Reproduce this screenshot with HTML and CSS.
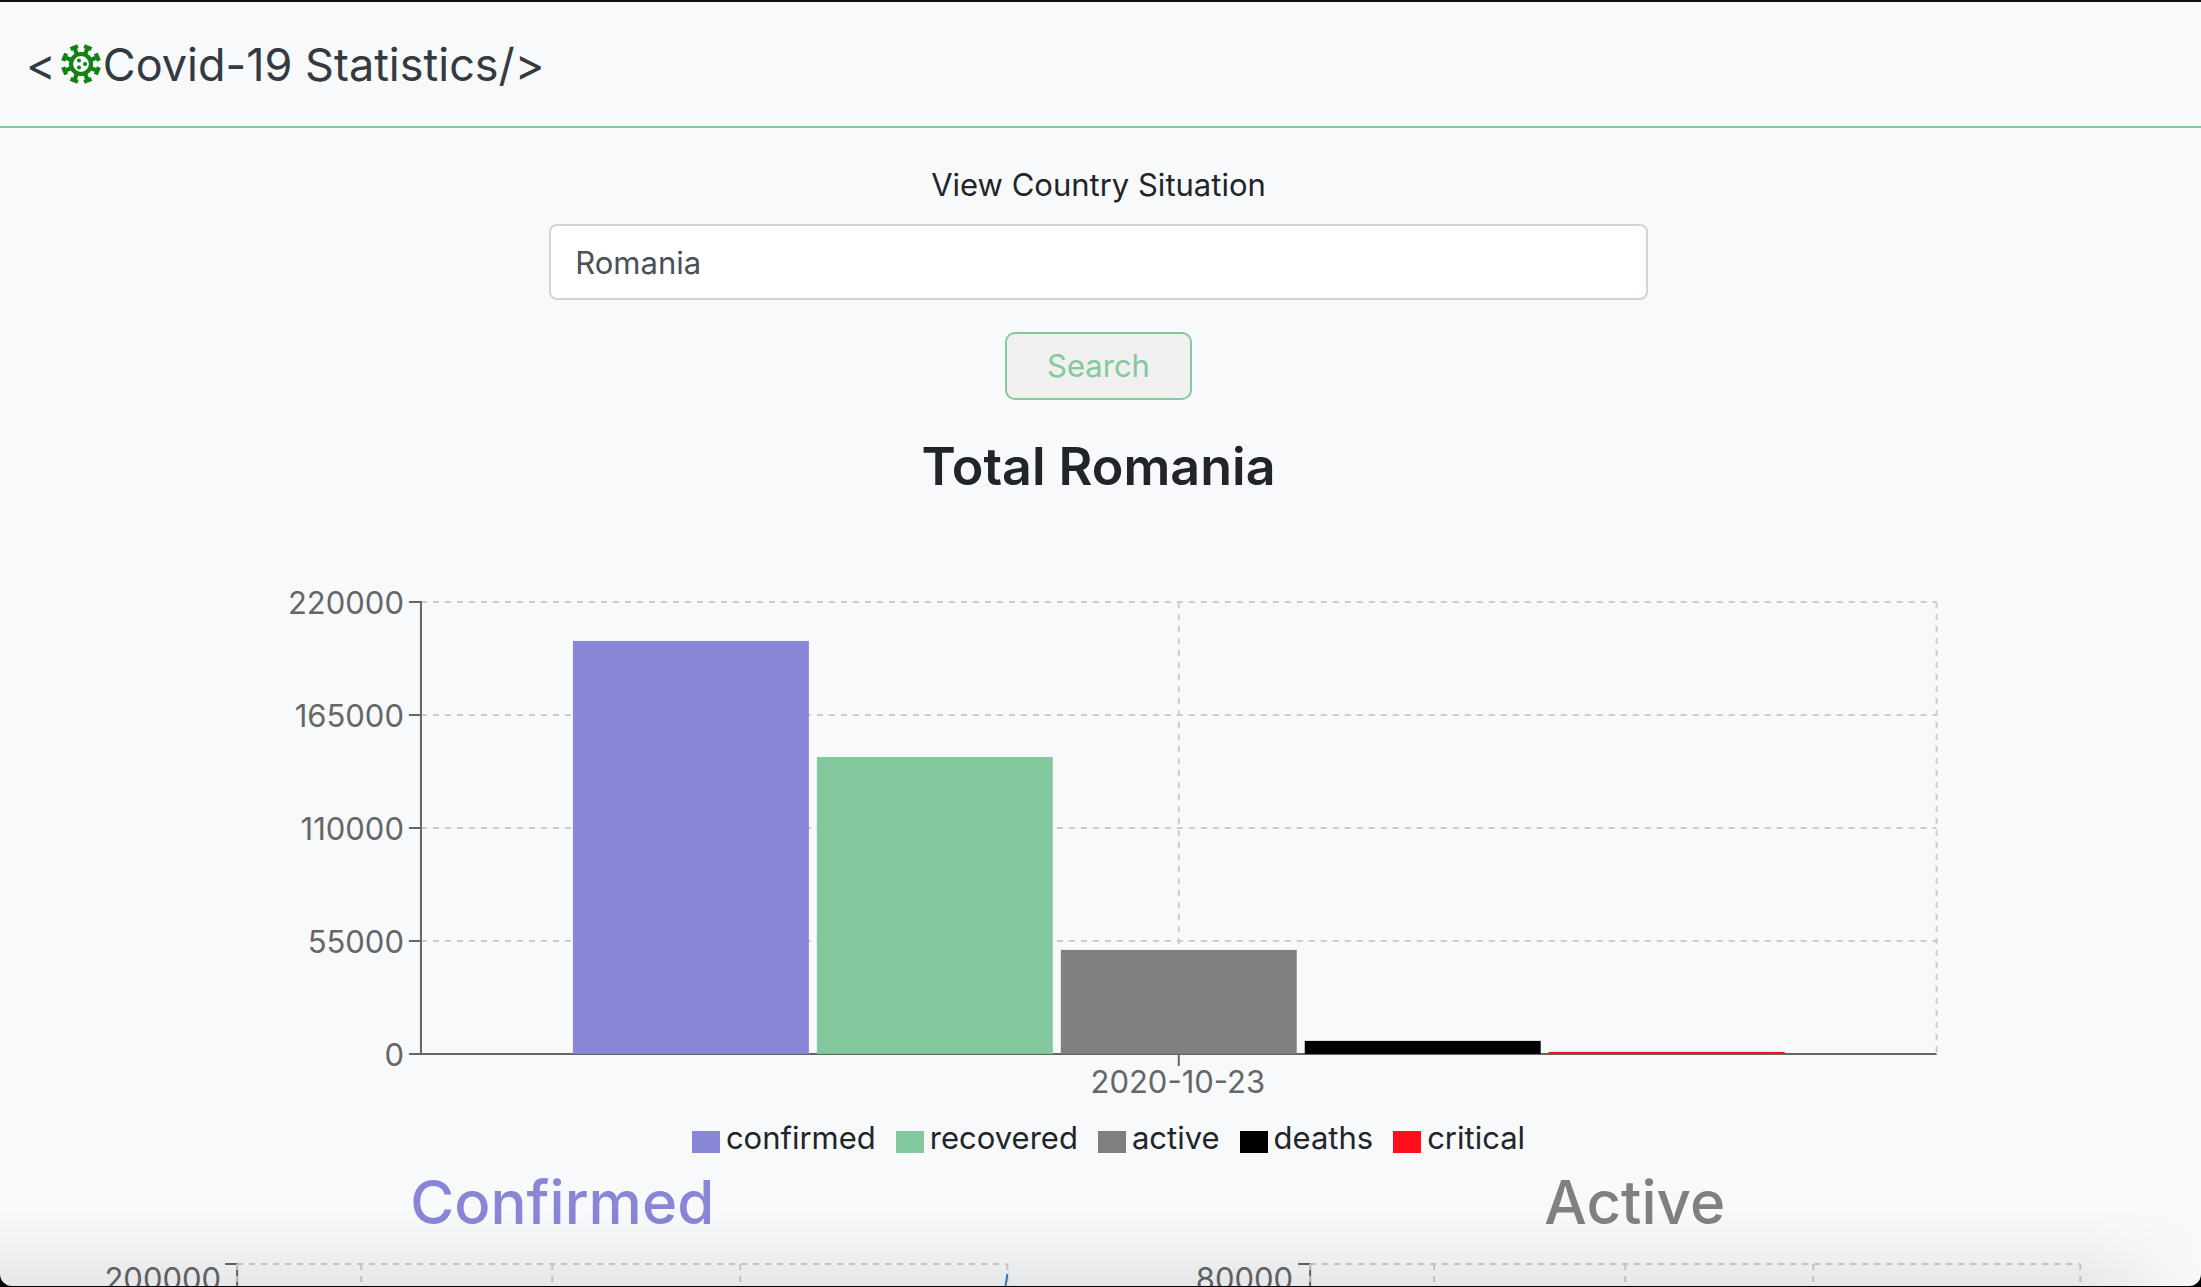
FILE: index.html
```html
<!DOCTYPE html>
<html lang="en">
<head>
<meta charset="utf-8">
<meta name="viewport" content="width=device-width, initial-scale=1">
<title>Covid-19 Statistics</title>
<link rel="stylesheet" href="styles.css">
</head>
<body>
<div class="window">
  <header class="navbar">
    <a class="brand" href="#"><span>&lt;</span><svg class="brand-icon" viewBox="-20 -20 40 40" aria-hidden="true">
      <defs><path id="spike" d="M0-11V-18M-4-17.7H4"/></defs>
      <g fill="none" stroke="currentColor" stroke-width="4.2">
        <circle r="10"/>
        <use href="#spike" transform="rotate(22.5)"/>
        <use href="#spike" transform="rotate(67.5)"/>
        <use href="#spike" transform="rotate(112.5)"/>
        <use href="#spike" transform="rotate(157.5)"/>
        <use href="#spike" transform="rotate(202.5)"/>
        <use href="#spike" transform="rotate(247.5)"/>
        <use href="#spike" transform="rotate(292.5)"/>
        <use href="#spike" transform="rotate(337.5)"/>
      </g>
      <g fill="currentColor"><circle cx="-2" cy="-3.6" r="2"/><circle cx="4" cy="0" r="2"/><circle cx="-2" cy="3.6" r="2"/></g>
    </svg><span>Covid-19 Statistics/&gt;</span></a>
  </header>

  <main class="content">
    <form class="search">
      <label class="search-label" for="country">View Country Situation</label>
      <input class="search-input" id="country" type="text" value="Romania">
      <button class="search-button" type="button">Search</button>
    </form>

    <section class="total">
      <h1 class="total-title">Total Romania</h1>
      <svg class="total-chart" viewBox="0 0 1758 528" role="img" aria-label="Totals for Romania on 2020-10-23">
        <g class="grid">
          <path d="M201 20H1717M201 133H1717M201 246H1717M201 359H1717"/>
          <path d="M959 20V472M1717 20V472"/>
        </g>
        <path class="axis" d="M201 19V472M189 472H1717M189 20H201M189 133H201M189 246H201M189 359H201M959 472V484"/>
        <g class="tick tick-y">
          <text x="184" y="32">220000</text>
          <text x="184" y="145">165000</text>
          <text x="184" y="258">110000</text>
          <text x="184" y="371">55000</text>
          <text x="184" y="484">0</text>
        </g>
        <text class="tick tick-x" x="958" y="511">2020-10-23</text>
        <rect class="confirmed" x="353" y="59" width="236" height="413"/>
        <rect class="recovered" x="597" y="175" width="236" height="297"/>
        <rect class="active" x="841" y="368" width="236" height="104"/>
        <rect class="deaths" x="1085" y="459" width="236" height="13"/>
        <rect class="critical" x="1329" y="470" width="236" height="2"/>
      </svg>
      <ul class="legend">
        <li><svg viewBox="0 0 28 22"><rect class="confirmed" width="28" height="22"/></svg>confirmed</li>
        <li><svg viewBox="0 0 28 22"><rect class="recovered" width="28" height="22"/></svg>recovered</li>
        <li><svg viewBox="0 0 28 22"><rect class="active" width="28" height="22"/></svg>active</li>
        <li><svg viewBox="0 0 28 22"><rect class="deaths" width="28" height="22"/></svg>deaths</li>
        <li><svg viewBox="0 0 28 22"><rect class="critical" width="28" height="22"/></svg>critical</li>
      </ul>
    </section>

    <section class="trends">
      <article class="trend">
        <h2 class="trend-title trend-confirmed">Confirmed</h2>
        <svg class="trend-chart" viewBox="0 0 992 60" role="img" aria-label="Confirmed cases over time">
          <path class="axis" d="M131 23V60M119 24H131"/>
          <path class="grid" d="M131 24H901M131 24V60M255 24V60M446 24V60M634 24V60M901 24V60"/>
          <text class="tick tick-y" x="115" y="50">200000</text>
          <path class="series" d="M901 34L897 60"/>
        </svg>
      </article>
      <article class="trend">
        <h2 class="trend-title trend-active">Active</h2>
        <svg class="trend-chart" viewBox="0 0 992 60" role="img" aria-label="Active cases over time">
          <path class="axis" d="M131 23V60M119 24H131"/>
          <path class="grid" d="M131 24H901M131 24V60M255 24V60M446 24V60M634 24V60M901 24V60"/>
          <text class="tick tick-y" x="114" y="50">80000</text>
        </svg>
      </article>
    </section>
  </main>
  <div class="shade"></div>
</div>
</body>
</html>
```
FILE: styles.css
```css
* { box-sizing: border-box; }

body {
  margin: 0;
  background: #000;
  color: #212529;
  font-family: Inter, "Liberation Sans", sans-serif;
  font-size: 31px;
  line-height: 48px;
}

.window {
  position: relative;
  height: calc(100vh - 1px);
  overflow: hidden;
  border-top: 2px solid #111;
  border-radius: 0 0 12px 12px;
  background: #f8f9fb;
}

.navbar {
  display: flex;
  align-items: center;
  height: 126px;
  padding: 2px 26px 0;
  border-bottom: 2px solid #84c99d;
}

.brand {
  display: flex;
  align-items: center;
  color: #343a40;
  font-size: 45px;
  line-height: 72px;
  text-decoration: none;
}

.brand-icon {
  width: 40px;
  height: 40px;
  margin: 0 2px 2px 5px;
  color: #128212;
}

.content { padding-right: 4px; }

.search {
  display: flex;
  flex-direction: column;
  align-items: center;
  padding-top: 33px;
}

.search-input {
  width: 50%;
  height: 76px;
  margin: 15px 0 32px;
  padding: 0 24px;
  border: 2px solid #ced4da;
  border-radius: 8px;
  background: #fff;
  color: #495057;
  font: inherit;
}

.search-button {
  height: 68px;
  padding: 0 40px;
  border: 2px solid #84c99d;
  border-radius: 10px;
  background: #f0f0f0;
  color: #84c99d;
  font: inherit;
}

.total {
  display: flex;
  flex-direction: column;
  align-items: center;
}

.total-title {
  margin: 31px 0 79px;
  font-size: 52px;
  font-weight: 600;
  line-height: 72px;
}

.total-chart {
  display: block;
  width: 80%;
}

.grid {
  fill: none;
  stroke: #ccc;
  stroke-width: 2;
  stroke-dasharray: 6 6;
}

.axis {
  fill: none;
  stroke: #666;
  stroke-width: 2;
}

.tick { fill: #666; }
.tick-y { text-anchor: end; }
.tick-x { text-anchor: middle; }

.confirmed { fill: #8986d8; }
.recovered { fill: #84c99d; }
.active { fill: #808080; }
.deaths { fill: #000; }
.critical { fill: #ff0d1a; }

.legend {
  display: flex;
  gap: 20px;
  margin: 4px 0 0;
  padding: 0 0 0 20px;
  list-style: none;
}

.legend li {
  display: flex;
  align-items: center;
  gap: 6px;
}

.legend svg {
  width: 28px;
  height: 22px;
  margin-top: 8px;
}

.trends {
  display: grid;
  grid-template-columns: 1fr 1fr;
  padding: 0 26px;
}

.trend-title {
  margin: 0;
  padding-top: 2px;
  font-size: 60px;
  font-weight: 500;
  line-height: 76px;
  text-align: center;
}

.trend-confirmed { color: #8986d8; }
.trend-active { color: #808080; }

.trend-chart {
  display: block;
  width: calc(100% - 80px);
  margin-left: 80px;
}

.series {
  fill: none;
  stroke: #3182bd;
  stroke-width: 2;
}

.shade {
  position: absolute;
  right: 0;
  bottom: 0;
  left: 0;
  height: 76px;
  background: linear-gradient(to bottom, rgba(0, 0, 0, 0), rgba(0, 0, 0, 0.03) 50%, rgba(0, 0, 0, 0.07));
  mask-image: linear-gradient(to right, #000 calc(100% - 120px), transparent);
  pointer-events: none;
}
```
